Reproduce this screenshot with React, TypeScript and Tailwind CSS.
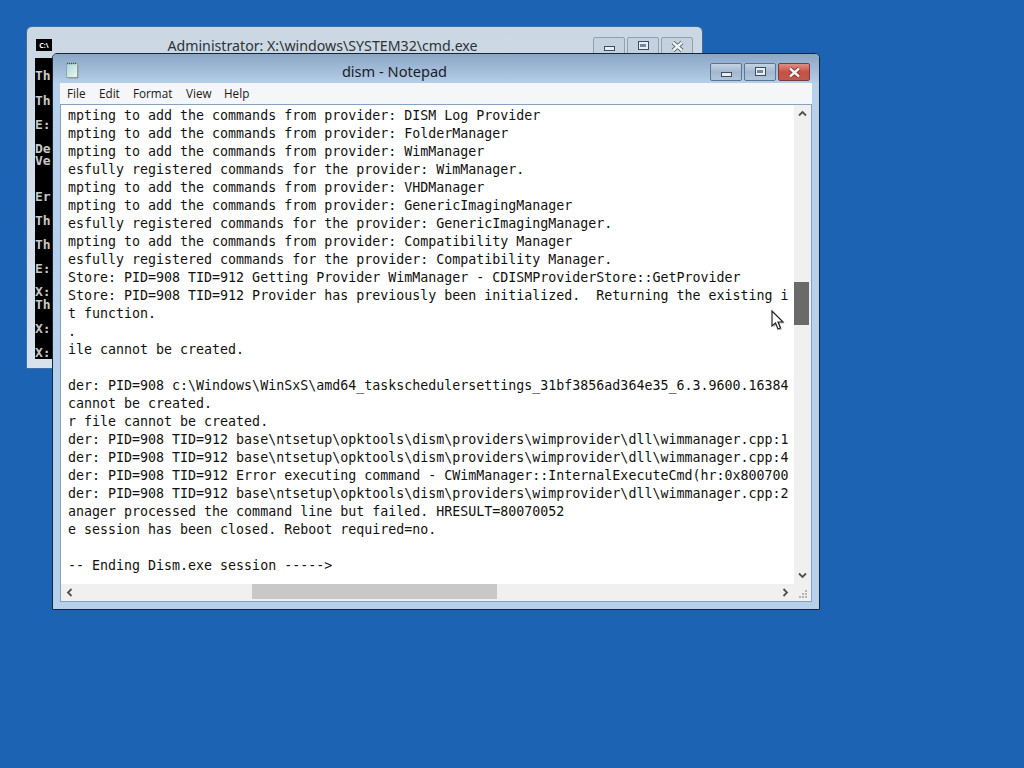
const LINES = [
  "mpting to add the commands from provider: DISM Log Provider",
  "mpting to add the commands from provider: FolderManager",
  "mpting to add the commands from provider: WimManager",
  "esfully registered commands for the provider: WimManager.",
  "mpting to add the commands from provider: VHDManager",
  "mpting to add the commands from provider: GenericImagingManager",
  "esfully registered commands for the provider: GenericImagingManager.",
  "mpting to add the commands from provider: Compatibility Manager",
  "esfully registered commands for the provider: Compatibility Manager.",
  "Store: PID=908 TID=912 Getting Provider WimManager - CDISMProviderStore::GetProvider",
  "Store: PID=908 TID=912 Provider has previously been initialized.  Returning the existing i",
  "t function.",
  ".",
  "ile cannot be created.",
  " ",
  "der: PID=908 c:\\Windows\\WinSxS\\amd64_taskschedulersettings_31bf3856ad364e35_6.3.9600.16384",
  "cannot be created.",
  "r file cannot be created.",
  "der: PID=908 TID=912 base\\ntsetup\\opktools\\dism\\providers\\wimprovider\\dll\\wimmanager.cpp:1",
  "der: PID=908 TID=912 base\\ntsetup\\opktools\\dism\\providers\\wimprovider\\dll\\wimmanager.cpp:4",
  "der: PID=908 TID=912 Error executing command - CWimManager::InternalExecuteCmd(hr:0x800700",
  "der: PID=908 TID=912 base\\ntsetup\\opktools\\dism\\providers\\wimprovider\\dll\\wimmanager.cpp:2",
  "anager processed the command line but failed. HRESULT=80070052",
  "e session has been closed. Reboot required=no.",
  " ",
  "-- Ending Dism.exe session ----->",
];

const CONSOLE = [
  { text: "Th", top: 12 },
  { text: "Th", top: 37 },
  { text: "E:", top: 61 },
  { text: "De", top: 85 },
  { text: "Ve", top: 97 },
  { text: "Er", top: 133 },
  { text: "Th", top: 157 },
  { text: "Th", top: 181 },
  { text: "E:", top: 205 },
  { text: "X:", top: 228 },
  { text: "Th", top: 241 },
  { text: "X:", top: 265 },
  { text: "X:", top: 289 },
];

function CaptionButton({ kind, active }: { kind: "min" | "max" | "close"; active?: boolean }) {
  let look = "bg-[#c4d2df] border-[#8fa0b0]";
  if (active) {
    look =
      kind === "close"
        ? "bg-gradient-to-b from-[#dc8f87] via-[#c8503f] to-[#bd5a52] border-[#7d3a3a]"
        : "bg-gradient-to-b from-[#c3d3e3] via-[#a3b8cf] to-[#b1c5da] border-[#5e7590]";
  }
  return (
    <div className={`flex h-full w-[32px] items-center justify-center rounded-[2px] border ${look}`}>
      {kind === "min" && <div className="mt-[5px] h-[5px] w-[11px] border border-[#3d4d5e] bg-[#e8eef3]" />}
      {kind === "max" && (
        <div className="mb-[1px] flex h-[9px] w-[11px] items-center justify-center border border-[#3d4d5e] bg-[#e8eef3]">
          <div className="h-[3px] w-[6px] bg-[#7288a0]" />
        </div>
      )}
      {kind === "close" && (
        <svg width="13" height="11" viewBox="0 0 13 11">
          <path d="M2 1.5 L11 9.5 M11 1.5 L2 9.5" stroke={active ? "#6a2a2a" : "#3d4d5e"} strokeWidth="4" />
          <path d="M2 1.5 L11 9.5 M11 1.5 L2 9.5" stroke="#f4f4f4" strokeWidth="2.4" />
        </svg>
      )}
    </div>
  );
}

function ScrollArrow({ d }: { d: string }) {
  return (
    <svg width="9" height="9" viewBox="0 0 9 9">
      <path d={d} fill="none" stroke="#505050" strokeWidth="1.8" />
    </svg>
  );
}

function NotepadIcon() {
  return (
    <svg width="14" height="17" viewBox="0 0 14 17">
      <defs>
        <linearGradient id="pad" x1="0" y1="0" x2="1" y2="1">
          <stop offset="0" stopColor="#a9d3e0" />
          <stop offset="0.6" stopColor="#d4ebe6" />
          <stop offset="1" stopColor="#f2f8e4" />
        </linearGradient>
      </defs>
      <rect x="1.5" y="1.5" width="11" height="14" fill="url(#pad)" stroke="#8fa6ad" />
      <path d="M13 3v13H3" fill="none" stroke="#6f8a72" strokeOpacity="0.6" />
      <path d="M2 1.5h10" stroke="#3f4f58" strokeDasharray="1 1" strokeWidth="1.4" />
    </svg>
  );
}

export default function App() {
  return (
    <div className="relative h-[768px] w-[1024px] overflow-hidden bg-[#1c63b3]" style={{ fontFamily: "'Noto Sans', sans-serif" }}>
      {/* cmd window, mostly behind notepad */}
      <div className="absolute left-[26px] top-[26px] flex h-[343px] w-[677px] flex-col rounded-t-[6px] border border-[#3f6f9f] bg-gradient-to-b from-[#cbd8e3] to-[#d7e2ec] px-[8px] pb-[9px]">
        <div className="flex h-[31px] shrink-0 items-start">
          <div className="ml-[1px] mt-[12px] flex h-[12px] w-[16px] items-center justify-center bg-black text-[7px] font-bold leading-none text-white">C:\</div>
          <div className="mt-[9px] flex-1 text-center text-[14.2px] leading-[20px] text-[#2c3238]">Administrator: X:\windows\SYSTEM32\cmd.exe</div>
          <div className="mr-[1px] mt-[10px] flex h-[18px] gap-[2px]">
            <CaptionButton kind="min" />
            <CaptionButton kind="max" />
            <CaptionButton kind="close" />
          </div>
        </div>
        <div className="relative flex-1 bg-black">
          {CONSOLE.map((l, i) => (
            <div key={i} className="absolute left-0 text-[13px] font-bold leading-[12px] text-[#c8c8c8]" style={{ top: l.top, fontFamily: "'DejaVu Sans Mono', monospace" }}>
              {l.text}
            </div>
          ))}
        </div>
      </div>

      {/* notepad */}
      <div className="absolute left-[52px] top-[53px] flex h-[557px] w-[768px] flex-col rounded-t-[5px] border border-[#12263c] bg-[#b7d0eb] px-[7px] pb-[7px]">
        <div className="-mx-[7px] flex h-[29px] shrink-0 items-center rounded-t-[4px] bg-gradient-to-b from-[#8ba7c5] to-[#b5cee9] px-[7px]">
          <div className="ml-[5px] mt-[3px]">
            <NotepadIcon />
          </div>
          <div className="mt-[5px] flex-1 text-center text-[14.6px] leading-[20px] text-[#1c2026]">dism - Notepad</div>
          <div className="mr-[2px] mt-[7px] flex h-[18px] gap-[2px]">
            <CaptionButton kind="min" active />
            <CaptionButton kind="max" active />
            <CaptionButton kind="close" active />
          </div>
        </div>

        <div className="flex h-[21px] shrink-0 items-center bg-[#f5f6f7] pl-[7px] text-[11.7px] text-[#1a1a1a]" style={{ fontFamily: "'Open Sans', sans-serif" }}>
          <span className="w-[32px]">File</span>
          <span className="w-[34px]">Edit</span>
          <span className="w-[53px]">Format</span>
          <span className="w-[38px]">View</span>
          <span>Help</span>
        </div>

        <div className="flex min-h-0 flex-1 flex-col border border-[#82a3c2] bg-white">
          <div className="flex min-h-0 flex-1">
            <div className="min-w-0 flex-1 overflow-hidden pl-[7px] pr-[6px] pt-[2px] text-[13.3px] leading-[18px] text-[#111111]" style={{ fontFamily: "'DejaVu Sans Mono', monospace" }}>
              {LINES.map((l, i) => (
                <div key={i} className="h-[18px] overflow-hidden whitespace-pre">
                  {l}
                </div>
              ))}
            </div>
            <div className="flex w-[17px] shrink-0 flex-col items-center bg-[#f0f0f0]">
              <div className="flex h-[17px] shrink-0 items-center justify-center">
                <ScrollArrow d="M1 6.5 L4.5 3 L8 6.5" />
              </div>
              <div className="mr-[2px] mt-[160px] h-[43px] w-[15px] bg-[#6a6a6a]" />
              <div className="flex-1" />
              <div className="flex h-[17px] shrink-0 items-center justify-center">
                <ScrollArrow d="M1 2.5 L4.5 6 L8 2.5" />
              </div>
            </div>
          </div>
          <div className="flex h-[17px] shrink-0 items-center bg-[#f0f0f0]">
            <div className="flex w-[17px] shrink-0 items-center justify-center">
              <ScrollArrow d="M6.5 1 L3 4.5 L6.5 8" />
            </div>
            <div className="ml-[174px] h-[15px] w-[245px] self-start bg-[#c8c8c8]" />
            <div className="flex-1" />
            <div className="mr-[1px] flex w-[17px] shrink-0 items-center justify-center">
              <ScrollArrow d="M2.5 1 L6 4.5 L2.5 8" />
            </div>
            <div className="w-[16px] shrink-0 self-end pb-[1px]">
              <svg width="14" height="12" viewBox="0 0 14 12">
                <path d="M10 2h2v2h-2zM7 5h2v2H7zM10 5h2v2h-2zM4 8h2v2H4zM7 8h2v2H7zM10 8h2v2h-2z" fill="#b4b4b4" />
              </svg>
            </div>
          </div>
        </div>
      </div>

      {/* mouse pointer */}
      <svg className="absolute left-[771px] top-[310px]" width="17" height="23" viewBox="0 0 17 23">
        <path d="M2.5 2.5 L2.5 17.5 L6 14.5 L8.5 20.5 L11 19.5 L8.5 13.5 L13.5 13.5 Z" fill="#000000" fillOpacity="0.25" />
        <path d="M1 1 L1 16 L4.5 13 L7 19 L9.5 18 L7 12 L12 12 Z" fill="#ffffff" stroke="#222222" strokeWidth="1.2" />
      </svg>
    </div>
  );
}
